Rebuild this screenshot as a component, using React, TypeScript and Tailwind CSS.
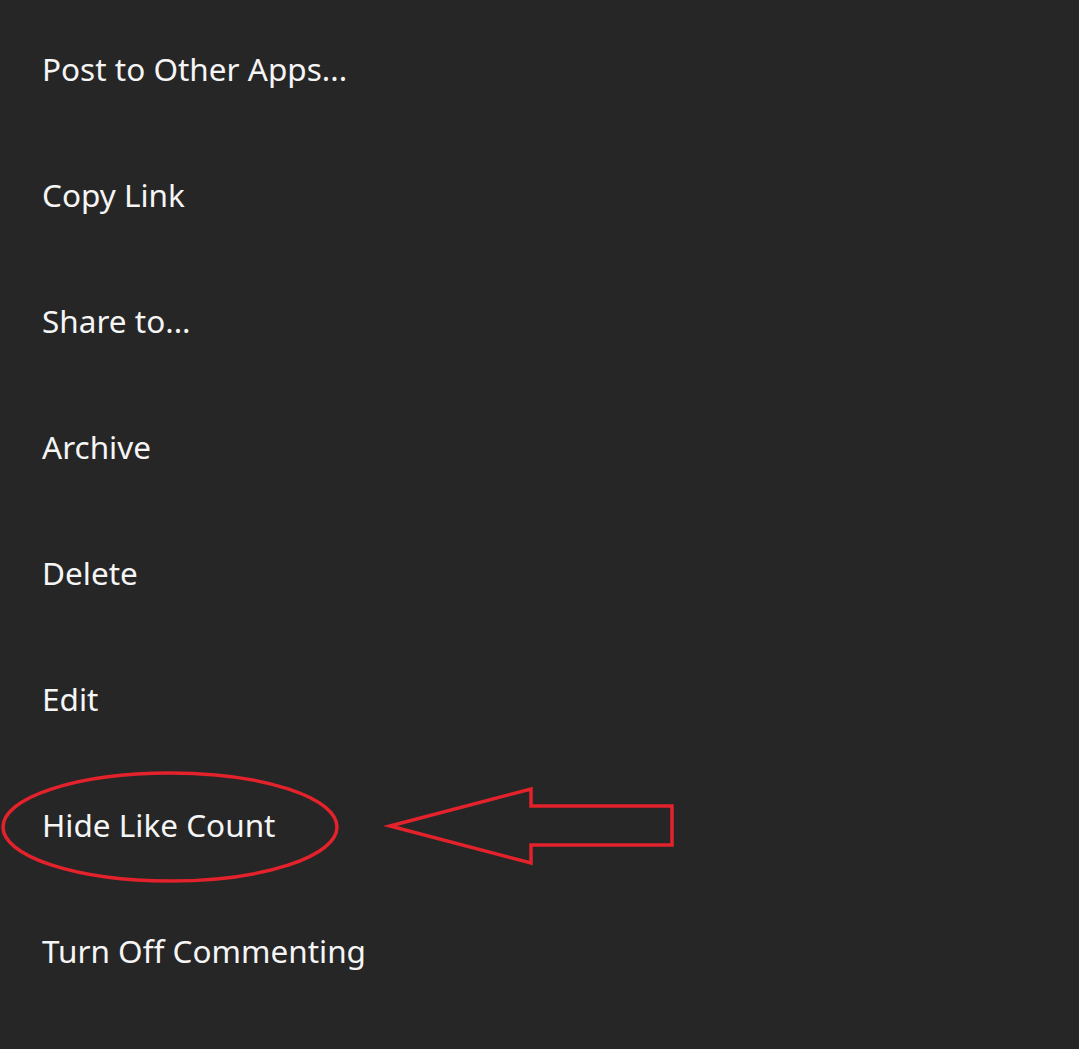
const items = [
  'Post to Other Apps...',
  'Copy Link',
  'Share to...',
  'Archive',
  'Delete',
  'Edit',
  'Hide Like Count',
  'Turn Off Commenting',
];

export default function App() {
  return (
    <div className="relative w-[1079px] h-[1049px] overflow-hidden bg-[#262626] pt-[6px]">
      <ul className="flex flex-col">
        {items.map((label) => (
          <li
            key={label}
            className="h-[126px] flex items-center pl-[42px] text-[31.5px] text-[#f5f5f5]"
            style={{ fontFamily: '"Noto Sans", sans-serif' }}
          >
            {label}
          </li>
        ))}
      </ul>

      {/* annotation overlay */}
      <svg
        className="absolute left-0 top-0 pointer-events-none"
        width="1079"
        height="1049"
        viewBox="0 0 1079 1049"
        fill="none"
      >
        <ellipse cx="170" cy="827" rx="167" ry="54" stroke="#e3222b" strokeWidth="3.5" />
        <path
          d="M390 826 L531 789 L531 806 L672 806 L672 845 L531 845 L531 863 Z"
          stroke="#e3222b"
          strokeWidth="3.5"
          strokeLinejoin="miter"
        />
      </svg>
    </div>
  );
}
